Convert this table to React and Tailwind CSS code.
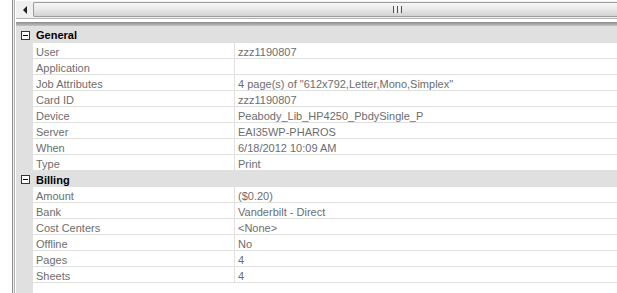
import React from 'react';

const sections = [
  {
    title: 'General',
    rows: [
      ['User', 'zzz1190807'],
      ['Application', ''],
      ['Job Attributes', '4 page(s) of "612x792,Letter,Mono,Simplex"'],
      ['Card ID', 'zzz1190807'],
      ['Device', 'Peabody_Lib_HP4250_PbdySingle_P'],
      ['Server', 'EAI35WP-PHAROS'],
      ['When', '6/18/2012 10:09 AM'],
      ['Type', 'Print'],
    ],
  },
  {
    title: 'Billing',
    rows: [
      ['Amount', '($0.20)'],
      ['Bank', 'Vanderbilt - Direct'],
      ['Cost Centers', '<None>'],
      ['Offline', 'No'],
      ['Pages', '4'],
      ['Sheets', '4'],
    ],
  },
];

const Toggle = () => (
  <div className="w-[9px] h-[9px] border border-[#333] bg-white flex items-center justify-center">
    <div className="w-[5px] h-[1px] bg-black" />
  </div>
);

const SectionHeader = ({ title, first }) => (
  <div className={`flex items-center bg-[#e0e0e0] ${first ? 'h-[17px]' : 'h-[16px]'}`}>
    <div className="w-[17px] flex pl-[5px] pt-[1px]">
      <Toggle />
    </div>
    <span className="pl-[3px] pt-[2px] font-bold text-black">{title}</span>
  </div>
);

const Row = ({ name, value }) => (
  <div className="flex h-[16px]">
    <div className="w-[17px] bg-[#e0e0e0]" />
    <div className="w-[202px] border-b border-r border-[#e0e0e0] pl-[3px] leading-[18px] text-[#6d6d6d] whitespace-nowrap">
      {name}
    </div>
    <div className="flex-1 border-b border-[#e0e0e0] pl-[3px] leading-[18px] text-[#6d6d6d] whitespace-nowrap">
      {value}
    </div>
  </div>
);

const Scrollbar = () => (
  <div className="flex h-[17px] bg-[#f0f0f0] items-center overflow-hidden">
    <div className="w-[17px] h-full flex items-center justify-center">
      <div className="w-0 h-0 border-y-[4px] border-y-transparent border-r-[4px] border-r-[#222]" />
    </div>
    <div className="flex-1 h-[15px] mr-[-12px] flex items-center border-y border-l border-[#9c9c9c] rounded-l-[2px] bg-gradient-to-b from-[#f6f6f6] via-[#e8e8e8] to-[#d2d2d2]">
      <div className="ml-[359px] flex gap-[1px]">
        <div className="w-[1px] h-[7px] bg-[#555]" />
        <div className="w-[1px] h-[7px] bg-[#f8f8f8]" />
        <div className="w-[1px] h-[7px] bg-[#555]" />
        <div className="w-[1px] h-[7px] bg-[#f8f8f8]" />
        <div className="w-[1px] h-[7px] bg-[#555]" />
      </div>
    </div>
  </div>
);

export default function App() {
  return (
    <div className="w-[617px] h-[293px] bg-white flex overflow-hidden text-[11px] font-['Liberation_Sans',Arial,sans-serif]">
      <div className="w-[12px] bg-white" />
      <div className="w-[1px] bg-[#8e8e8e]" />
      <div className="w-[1px] bg-[#f0f0f0]" />
      <div className="w-[1px] bg-[#b0b0b0]" />
      <div className="w-[1px] bg-white" />
      <div className="flex-1 flex flex-col min-w-0">
        <div className="h-[1px] bg-white" />
        <Scrollbar />
        <div className="h-[1px] bg-[#b4b4b4]" />
        <div className="h-[3px] bg-white" />
        <div className="h-[4px] bg-gradient-to-b from-[#8c8c8c] to-[#c4c4c4]" />
        {sections.map((s, i) => (
          <div key={s.title}>
            <SectionHeader title={s.title} first={i === 0} />
            {s.rows.map(([n, v]) => (
              <Row key={n} name={n} value={v} />
            ))}
          </div>
        ))}
        <div className="flex flex-1">
          <div className="w-[17px] bg-[#e0e0e0]" />
          <div className="flex-1" />
        </div>
      </div>
    </div>
  );
}
